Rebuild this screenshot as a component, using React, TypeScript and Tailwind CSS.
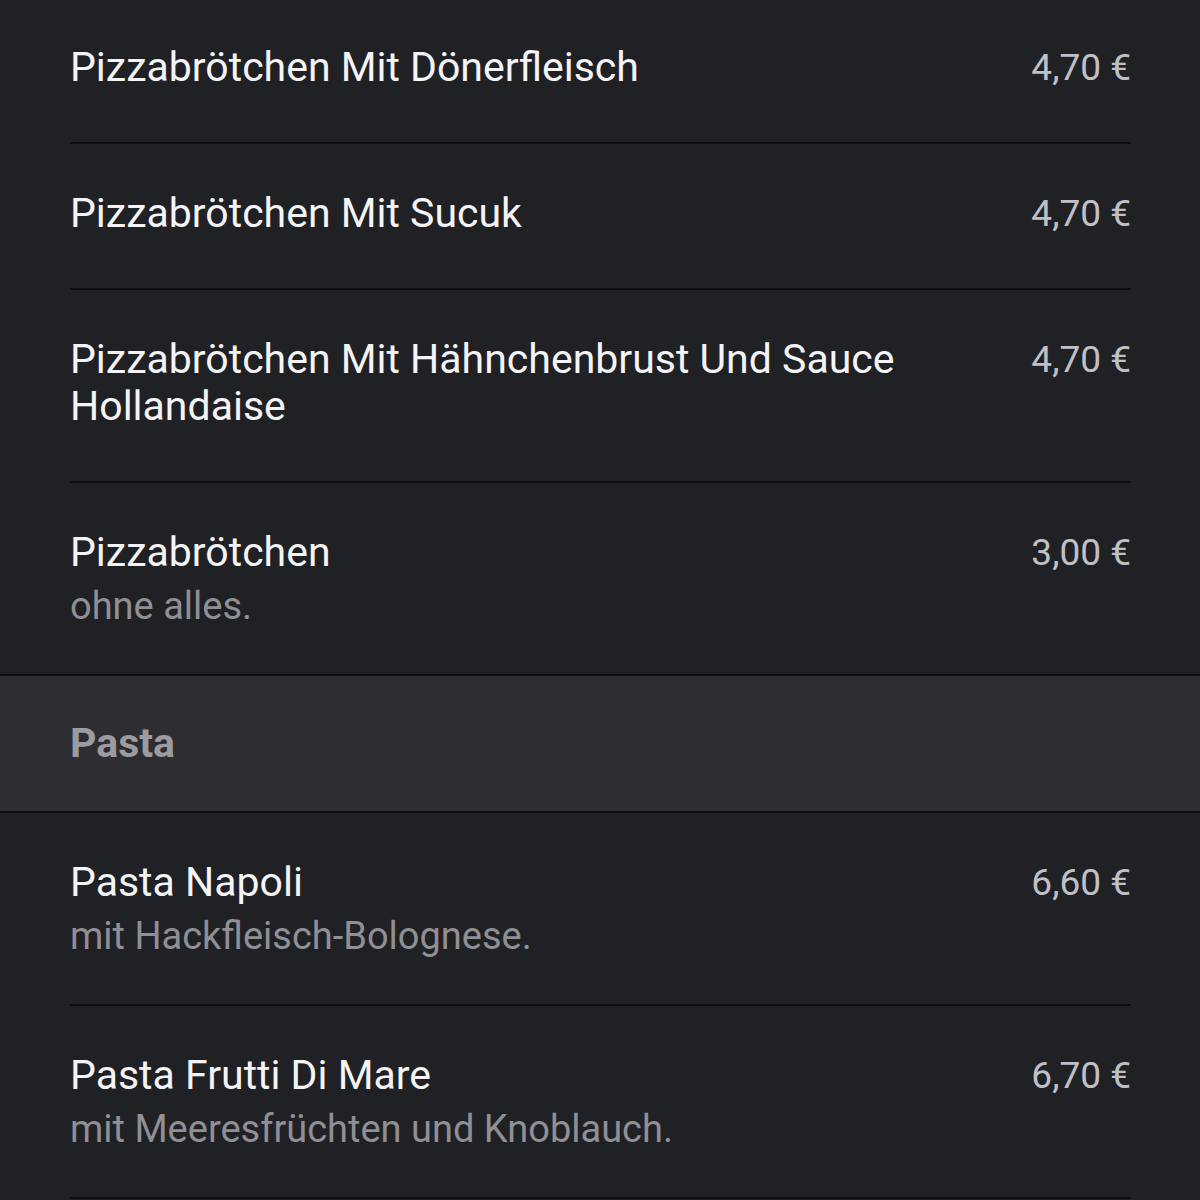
import React from "react";

type Item = { name: string; price: string; desc?: string };

const before: Item[] = [
  { name: "Pizzabrötchen Mit Dönerfleisch", price: "4,70 €" },
  { name: "Pizzabrötchen Mit Sucuk", price: "4,70 €" },
  { name: "Pizzabrötchen Mit Hähnchenbrust Und Sauce Hollandaise", price: "4,70 €" },
  { name: "Pizzabrötchen", price: "3,00 €", desc: "ohne alles." },
];

const pasta: Item[] = [
  { name: "Pasta Napoli", price: "6,60 €", desc: "mit Hackfleisch-Bolognese." },
  { name: "Pasta Frutti Di Mare", price: "6,70 €", desc: "mit Meeresfrüchten und Knoblauch." },
];

function Row({ item, first, last }: { item: Item; first?: boolean; last?: boolean }) {
  return (
    <div className="pl-[70px] pr-[69px]">
      <div
        className={
          "flex justify-between gap-10 pb-[51px] " +
          (first ? "pt-[44px] " : "pt-[46px] ") +
          (last ? "" : "border-b-2 border-[#0e0e11]")
        }
      >
        <div className="min-w-0 max-w-[860px]">
          <div className="text-[41px] leading-[47px] text-[#f4f4f6]">{item.name}</div>
          {item.desc && (
            <div className="mt-[13px] text-[38px] leading-[34px] text-[#8f8f95]">{item.desc}</div>
          )}
        </div>
        <div className="shrink-0 text-[37px] leading-[47px] text-[#c0c0c5]">{item.price}</div>
      </div>
    </div>
  );
}

export default function App() {
  return (
    <div
      className="w-[1200px] h-[1200px] overflow-hidden bg-[#202125]"
      style={{ fontFamily: "Roboto, 'Noto Sans', sans-serif" }}
    >
      {before.map((it, i) => (
        <Row key={it.name} item={it} first={i === 0} last={i === before.length - 1} />
      ))}
      <div className="border-y-2 border-[#0e0e11] bg-[#2d2d32] px-[70px] h-[139px] flex items-center">
        <span className="text-[41px] font-bold text-[#9b9ba0]">Pasta</span>
      </div>
      {pasta.map((it) => (
        <Row key={it.name} item={it} />
      ))}
    </div>
  );
}
